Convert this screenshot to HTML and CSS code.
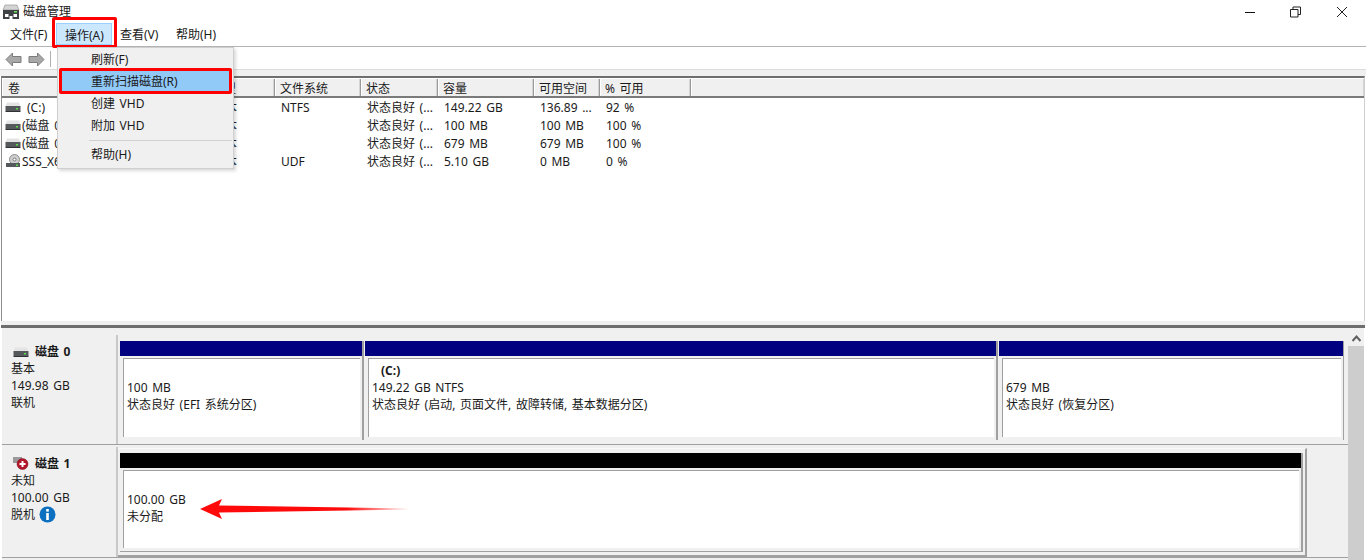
FILE: index.html
```html
<!DOCTYPE html>
<html lang="zh-CN">
<head>
<meta charset="utf-8">
<title>磁盘管理</title>
<link rel="stylesheet" href="styles.css">
</head>
<body>
<svg class="defs" width="0" height="0" aria-hidden="true">
  <symbol id="drive" viewBox="0 0 16 12">
    <path d="M2 1.500h12l1.500 4h-15z" fill="#e4e4e4"/>
    <rect x="0.500" y="5" width="15" height="5" fill="#55595c"/>
    <rect x="0.500" y="10" width="15" height="1" fill="#2f3234"/>
    <rect x="11" y="7" width="2" height="1.500" fill="#59e04a"/>
  </symbol>
</svg>
<div class="app">
  <header class="titlebar">
    <svg class="title-icon" viewBox="0 0 18 16" width="18" height="16">
      <path d="M3 1h12l2 5H1z" fill="#d4d4d4" stroke="#8a8a8a" stroke-width="0.600"/>
      <rect x="1" y="6" width="16" height="4" fill="#3f4245"/>
      <rect x="12" y="7" width="3" height="1.500" fill="#6fe05f"/>
      <rect x="1" y="10" width="16" height="5" fill="#3f4245"/>
      <rect x="3" y="10" width="3.500" height="3" fill="#fff"/>
      <rect x="11.500" y="10" width="3.500" height="3" fill="#fff"/>
      <rect x="7.500" y="12" width="3" height="3" fill="#fff"/>
    </svg>
    <span class="title-text">磁盘管理</span>
    <div class="win-controls">
      <span class="win-btn">
        <svg width="12" height="12" viewBox="0 0 12 12"><path d="M1 6.500h10" stroke="#111" fill="none"/></svg>
      </span>
      <span class="win-btn">
        <svg width="12" height="12" viewBox="0 0 12 12"><path d="M0.500 3.500h7.500v7.500h-7.500zM3 3.500v-2.500h7.500v7.500h-2.500" stroke="#222" fill="none"/></svg>
      </span>
      <span class="win-btn">
        <svg width="12" height="12" viewBox="0 0 12 12"><path d="M1 1l10 10M11 1l-10 10" stroke="#222" fill="none"/></svg>
      </span>
    </div>
  </header>

  <nav class="menubar">
    <span class="menu-item">文件(F)</span>
    <span class="menu-item menu-open">操作(A)</span>
    <span class="menu-item">查看(V)</span>
    <span class="menu-item">帮助(H)</span>
  </nav>

  <div class="toolbar">
    <svg class="tool-icon" width="17" height="15" viewBox="0 0 17 15"><path d="M1 7.500l6.500-6.500v3.500h8.500v6h-8.500v3.500z" fill="#a8a8a8" stroke="#7c7c7c" stroke-linejoin="round"/></svg>
    <svg class="tool-icon" width="17" height="15" viewBox="0 0 17 15"><path d="M16 7.500l-6.500-6.500v3.500h-8.500v6h8.500v3.500z" fill="#a8a8a8" stroke="#7c7c7c" stroke-linejoin="round"/></svg>
    <span class="tool-sep"></span>
  </div>

  <div class="strip"></div>

  <section class="volumes">
    <div class="col-grid head">
      <span>卷</span><span>布局</span><span>类型</span><span>文件系统</span><span>状态</span><span>容量</span><span>可用空间</span><span>% 可用</span><span class="filler"></span>
    </div>
    <div class="rows">
      <div class="col-grid row">
        <span class="vol vol-c"><svg class="vol-icon" width="16" height="12"><use href="#drive"/></svg>(C:)</span><span>简单</span><span>基本</span><span>NTFS</span><span>状态良好 (...</span><span>149.22 GB</span><span>136.89 ...</span><span>92 %</span>
      </div>
      <div class="col-grid row">
        <span class="vol"><svg class="vol-icon" width="16" height="12"><use href="#drive"/></svg>(磁盘 0 磁盘分区 1)</span><span>简单</span><span>基本</span><span></span><span>状态良好 (...</span><span>100 MB</span><span>100 MB</span><span>100 %</span>
      </div>
      <div class="col-grid row">
        <span class="vol"><svg class="vol-icon" width="16" height="12"><use href="#drive"/></svg>(磁盘 0 磁盘分区 4)</span><span>简单</span><span>基本</span><span></span><span>状态良好 (...</span><span>679 MB</span><span>679 MB</span><span>100 %</span>
      </div>
      <div class="col-grid row">
        <span class="vol"><svg class="vol-icon" width="16" height="15" viewBox="0 0 16 15"><circle cx="9.500" cy="5.500" r="5" fill="#cfcfcf" stroke="#8c8c8c"/><circle cx="9.500" cy="5.500" r="1.500" fill="#fff" stroke="#777"/><rect x="1" y="9" width="14" height="4" fill="#55595c"/><rect x="11" y="10.500" width="2" height="1.500" fill="#59e04a"/></svg>SSS_X64FRE_ZH-CN_DV9</span><span>简单</span><span>基本</span><span>UDF</span><span>状态良好 (...</span><span>5.10 GB</span><span>0 MB</span><span>0 %</span>
      </div>
    </div>
  </section>

  <div class="splitter"></div>

  <section class="graph">
    <div class="disks">
      <div class="disk">
        <div class="disk-label">
          <div class="disk-name"><svg class="disk-icon" width="16" height="12"><use href="#drive"/></svg><b>磁盘 0</b></div>
          <div>基本</div>
          <div>149.98 GB</div>
          <div>联机</div>
        </div>
        <div class="parts">
          <div class="part p-efi">
            <div class="bar"></div>
            <div class="part-body"><div class="pt-title"></div><div>100 MB</div><div>状态良好 (EFI 系统分区)</div></div>
          </div>
          <div class="part p-sys">
            <div class="bar"></div>
            <div class="part-body"><div class="pt-title"><b>(C:)</b></div><div>149.22 GB NTFS</div><div>状态良好 (启动, 页面文件, 故障转储, 基本数据分区)</div></div>
          </div>
          <div class="part p-rec">
            <div class="bar"></div>
            <div class="part-body"><div class="pt-title"></div><div>679 MB</div><div>状态良好 (恢复分区)</div></div>
          </div>
        </div>
      </div>
      <div class="disk disk-last">
        <div class="disk-label">
          <div class="disk-name">
            <svg class="disk-icon" width="16" height="14" viewBox="0 0 16 14"><rect x="0" y="0" width="9" height="6" fill="#9a9a9a"/><circle cx="9.500" cy="7" r="5.500" fill="#b3152b" stroke="#7a0f1f" stroke-width="0.500"/><path d="M6.500 7h6M9.500 4v6" stroke="#fff" stroke-width="2"/></svg><b>磁盘 1</b>
          </div>
          <div>未知</div>
          <div>100.00 GB</div>
          <div class="offline">脱机
            <svg class="info" width="17" height="17" viewBox="0 0 17 17"><circle cx="8.500" cy="8.500" r="8" fill="#0d6fc0"/><rect x="7.200" y="7" width="2.600" height="7" fill="#fff"/><rect x="7.200" y="3" width="2.600" height="2.600" fill="#fff"/></svg>
          </div>
        </div>
        <div class="parts parts-black">
          <div class="part p-unalloc">
            <div class="bar bar-black"></div>
            <div class="part-body"><div class="pt-title"></div><div>100.00 GB</div><div>未分配</div></div>
          </div>
        </div>
      </div>
    </div>
    <div class="scrollbar">
      <span class="scroll-btn">
        <svg width="9" height="7" viewBox="0 0 9 7"><path d="M0.500 6l4-4.500 4 4.500" stroke="#606060" stroke-width="2" fill="none"/></svg>
      </span>
      <span class="scroll-track"></span>
    </div>
  </section>

  <div class="menu-hl"></div>
  <div class="dropdown">
    <div class="dd-item">刷新(F)</div>
    <div class="dd-item dd-active">重新扫描磁盘(R)</div>
    <div class="dd-item">创建 VHD</div>
    <div class="dd-item">附加 VHD</div>
    <div class="dd-sep"></div>
    <div class="dd-item">帮助(H)</div>
  </div>

  <svg class="arrow" width="212" height="24" viewBox="0 0 212 24">
    <defs>
      <linearGradient id="fade" x1="0" x2="1" y1="0" y2="0">
        <stop offset="0" stop-color="#ff0a0a"/>
        <stop offset="0.700" stop-color="#ff0a0a"/>
        <stop offset="1" stop-color="#ff0a0a" stop-opacity="0"/>
      </linearGradient>
    </defs>
    <path d="M1 12L23 2 20 8.500 211 11.500 211 12.500 20 15.500 23 22z" fill="url(#fade)"/>
  </svg>
</div>
</body>
</html>
```

FILE: styles.css
```css
* { box-sizing: border-box; }
html, body { margin: 0; padding: 0; background: #fff; }
body {
  font-family: "Noto Sans", "Noto Sans CJK SC", sans-serif;
  font-size: 12px;
  word-spacing: 1.5px;
  color: #1a1a1a;
  overflow: hidden;
}
.defs { position: absolute; }
.app {
  position: relative;
  width: 1366px;
  height: 560px;
  overflow: hidden;
  display: flex;
  flex-direction: column;
  background: #fff;
}

/* title bar */
.titlebar {
  height: 23px;
  display: flex;
  align-items: center;
  padding-left: 2px;
  flex: none;
}
.title-icon { margin-right: 3px; }
.title-text { line-height: 23px; }
.win-controls { margin-left: auto; display: flex; margin-right: 1px; }
.win-btn { width: 46px; height: 20px; display: flex; align-items: center; justify-content: center; }

/* menu bar */
.menubar {
  height: 24px;
  flex: none;
  display: flex;
  padding-left: 3px;
  border-bottom: 1px solid #b4b4b4;
  background: #fff;
}
.menu-item { width: 56px; padding-left: 8px; line-height: 23px; white-space: nowrap; }
.menu-item:first-child { width: 53px; padding-left: 7px; }
.menu-open {
  height: 22px;
  line-height: 23px;
  background: #cce8ff;
  border: 1px solid #99d1ff;
}

/* toolbar */
.toolbar {
  height: 23px;
  flex: none;
  display: flex;
  align-items: center;
  padding: 2px 0 0 5px;
  gap: 6px;
  background: #fff;
  border-bottom: 1px solid #dcdcdc;
}
.tool-sep { width: 1px; height: 16px; background: #b0b0b0; margin-left: -1px; }
.strip { height: 6px; flex: none; background: #f0f0f0; }

/* volume list */
.volumes {
  height: 245px;
  flex: none;
  margin-left: 1px;
  margin-right: 1px;
  border-top: 2px solid #6e6e6e;
  border-left: 1px solid #8c8c8c;
  border-right: 1px solid #d0d0d0;
  display: flex;
  flex-direction: column;
  background: #fff;
}
.col-grid {
  display: grid;
  grid-template-columns: 155px 50px 68px 86px 77px 96px 66px 91px 1fr;
}
.head {
  height: 20px;
  background: #f0f0f0;
  border-top: 1px solid #fff;
  border-bottom: 2px solid #7a7a7a;
  line-height: 19px;
}
.head span {
  padding-left: 5px;
  border-right: 1px solid #9a9a9a;
  box-shadow: inset 1px 0 0 #fff, inset -1px 0 0 #d4d4d4;
  white-space: nowrap;
  overflow: hidden;
}
.head span:first-child { padding-left: 6px; }
.head .filler { border-right: 0; }
.rows { flex: 1; padding-top: 0; }
.row { height: 18px; line-height: 19px; }
.row span { padding-left: 6px; white-space: nowrap; overflow: hidden; }
.row .vol { padding-left: 3px; display: flex; align-items: center; }
.vol-icon { flex: none; margin-right: 1px; }
.vol-c .vol-icon { margin-right: 6px; }

.splitter {
  height: 7px;
  flex: none;
  margin-left: 1px;
  margin-right: 1px;
  background: #f0f0f0;
  border-bottom: 3px solid #6e6e6e;
}

/* graphical view */
.graph {
  flex: 1;
  min-height: 0;
  display: flex;
  background: #f0f0f0;
  margin-left: 2px;
  margin-right: 2px;
}
.disks { flex: 1; padding-top: 7px; min-width: 0; }
.disk {
  height: 110px;
  display: flex;
  border-bottom: 1px solid #a0a0a0;
  margin-bottom: 2px;
}
.disk-label {
  width: 116px;
  flex: none;
  padding: 8px 0 0 8px;
  line-height: 17px;
  background: #f0f0f0;
  border-right: 2px solid #c8c8c8;
  border-left: 1px solid #f0f0f0;
}
.disk-name { display: flex; align-items: center; height: 17px; }
.disk-icon { margin-left: 2px; margin-right: 6px; }
.disk-name b { font-weight: 700; }
.offline { display: flex; align-items: center; gap: 4px; }
.parts { flex: 1; display: flex; gap: 1px; padding: 6px 4px 4px 2px; min-width: 0; }
.part {
  display: flex;
  flex-direction: column;
  border-right: 2px solid #a0a0a0;
  background: #f0f0f0;
}
.p-efi { width: 244px; }
.p-sys { width: 633px; }
.p-rec { width: 345px; border-right-width: 1px; }
.bar { height: 15px; margin-left: 0; flex: none; background: #000080; }
.part-body {
  flex: 1;
  margin: 2px 2px 3px 3px;
  padding: 3px 0 0 3px;
  background: #fff;
  border-top: 1px solid #a0a0a0;
  border-left: 1px solid #a0a0a0;
  line-height: 17px;
  white-space: nowrap;
}
.pt-title { height: 17px; padding-left: 9px; }
.pt-title b { font-weight: 700; }

.disk-last { height: 111px; margin-bottom: 0; }
.parts-black {
  flex: none;
  width: 1189px;
  margin-top: 1px;
  padding: 4px 2px 3px 2px;
  border-top: 1px solid #f8f8f8;
  border-right: 2px solid #a0a0a0;
  border-bottom: 2px solid #a0a0a0;
}
.p-unalloc { flex: 1; border-right: 2px solid #a0a0a0; border-bottom: 1px solid #a0a0a0; }
.bar-black { background: #000; }

.scrollbar {
  width: 16px;
  flex: none;
  display: flex;
  flex-direction: column;
  margin-top: 2px;
}
.scroll-btn { height: 16px; display: flex; align-items: center; justify-content: center; background: #f0f0f0; }
.scroll-track { flex: 1; background: #cdcdcd; }

/* overlays */
.menu-hl {
  position: absolute;
  left: 52px;
  top: 17px;
  width: 65px;
  height: 31px;
  border: 3px solid #ff0000;
  border-radius: 2px;
}
.dropdown {
  position: absolute;
  left: 57px;
  top: 47px;
  width: 177px;
  height: 122px;
  padding: 0 1px;
  background: #f0f0f0;
  border: 1px solid #cfcfcf;
  box-shadow: 2px 2px 3px rgba(0, 0, 0, .15);
}
.dd-item { height: 22px; line-height: 24px; padding-left: 32px; white-space: nowrap; }
.dd-active {
  height: 26px;
  line-height: 22px;
  margin: -2px 0;
  padding-left: 29px;
  background: #91c9f7;
  border: 3px solid #ff0000;
  border-radius: 2px;
}
.dd-sep { height: 1px; margin: 4px 0 2px 30px; background: #d0d0d0; }
.arrow { position: absolute; left: 199px; top: 497px; }
```
